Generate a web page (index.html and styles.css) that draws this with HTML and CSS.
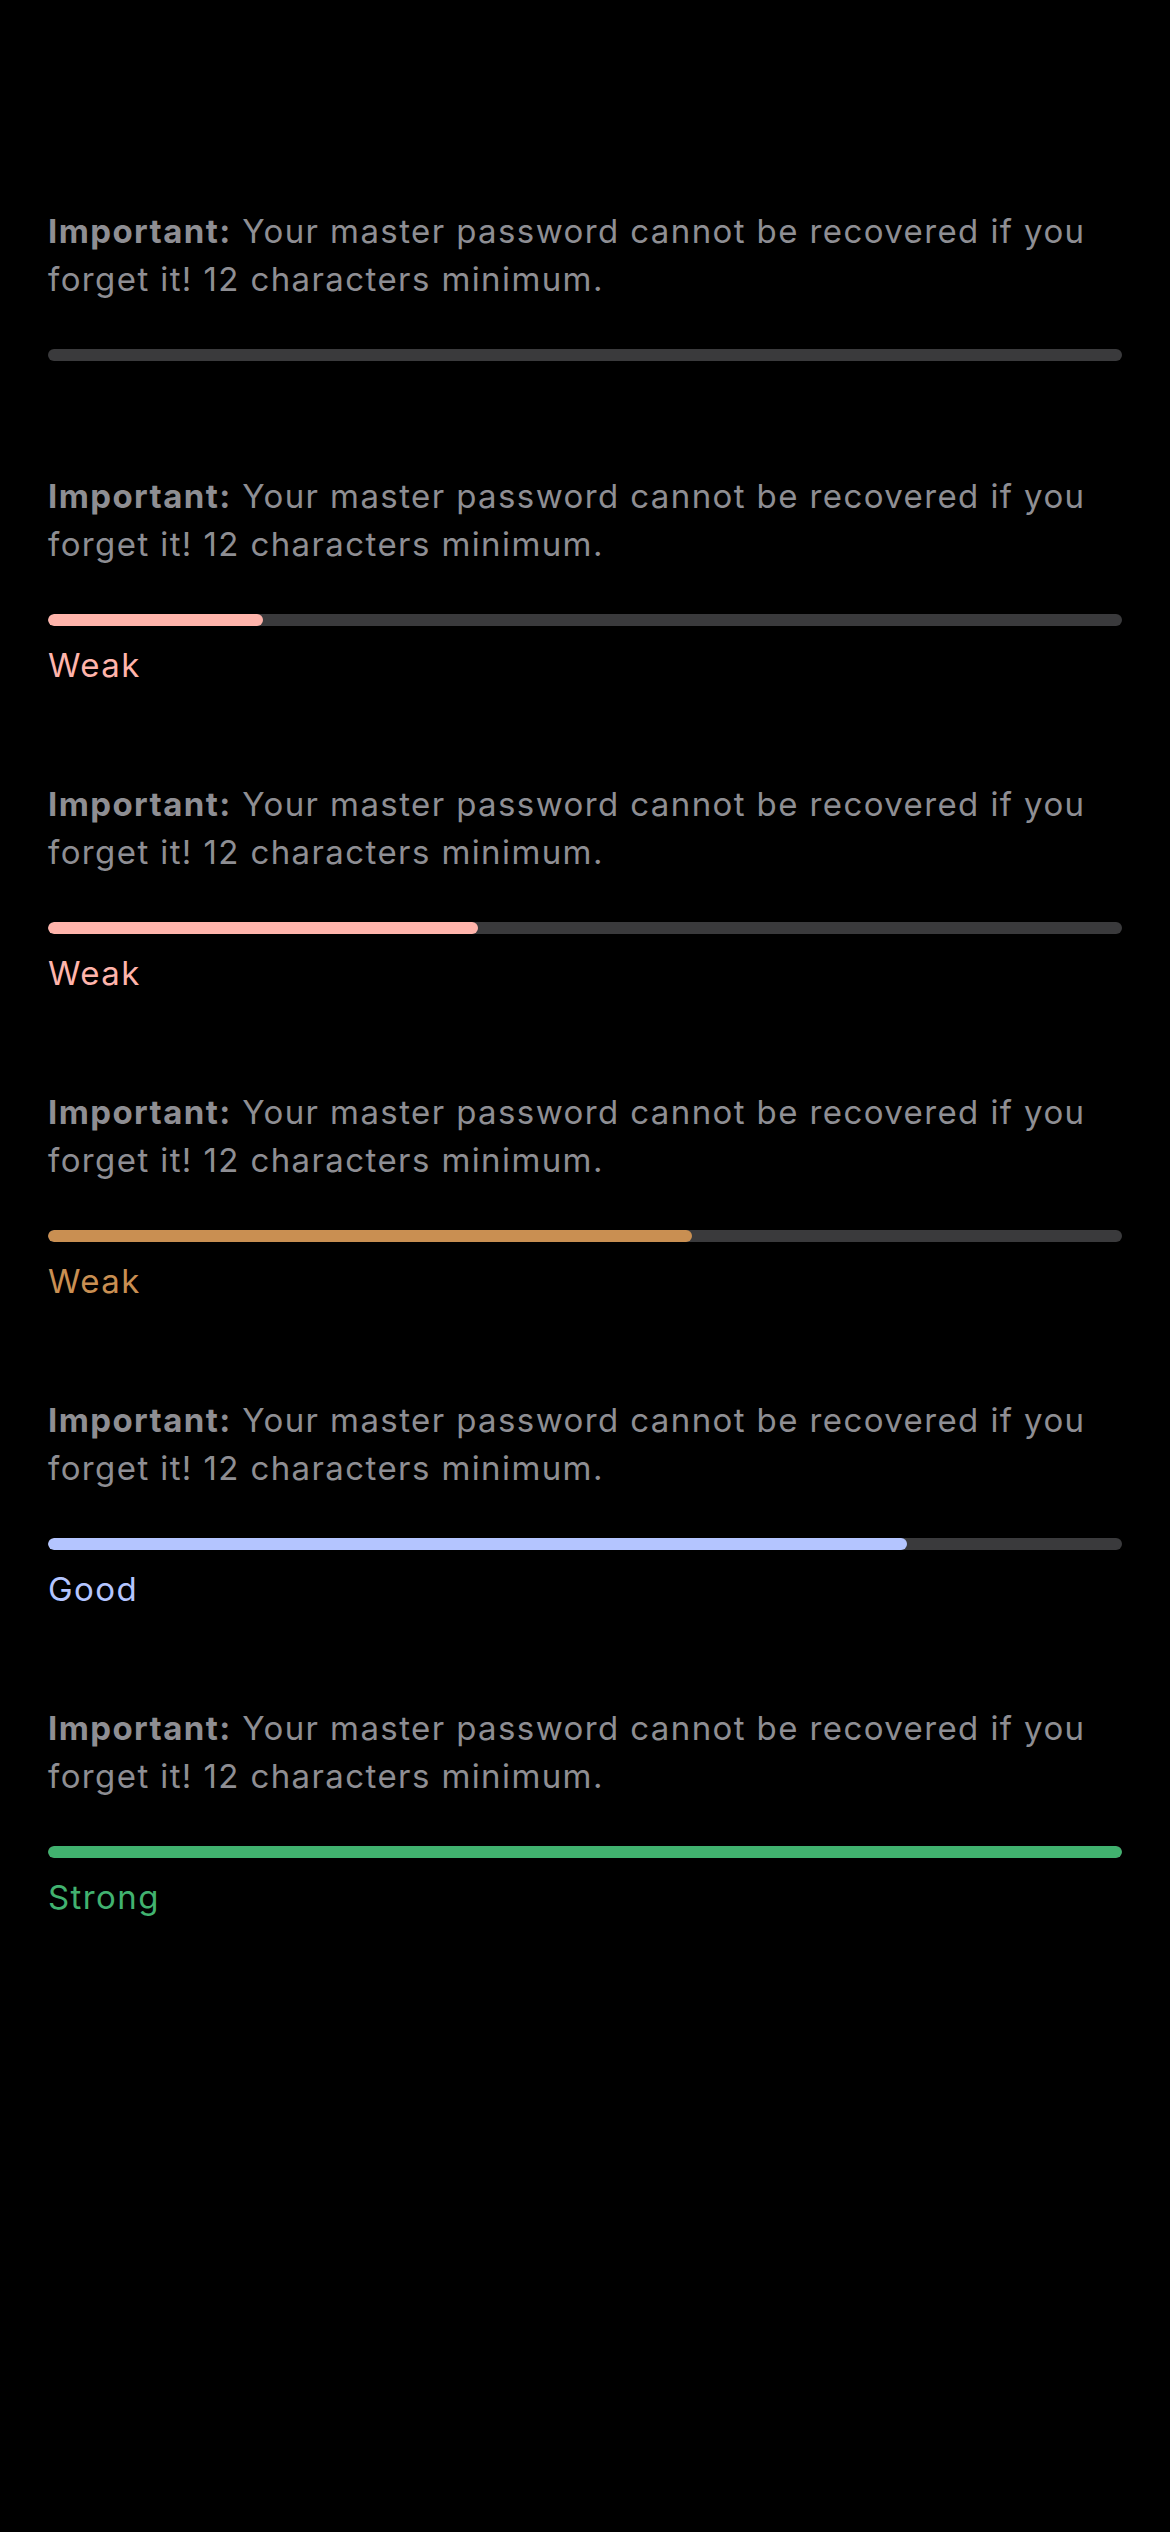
FILE: index.html
```html
<!DOCTYPE html>
<html lang="en">
<head>
<meta charset="utf-8">
<title>Password strength</title>
<link rel="stylesheet" href="styles.css">
</head>
<body>
<main class="list">
  <section class="item item--empty">
    <p class="hint"><strong>Important:</strong> Your master password cannot be recovered if you forget it! 12 characters minimum.</p>
    <div class="track"></div>
  </section>
  <section class="item">
    <p class="hint"><strong>Important:</strong> Your master password cannot be recovered if you forget it! 12 characters minimum.</p>
    <div class="track"><div class="fill fill--weak" style="width:20%"></div></div>
    <div class="label label--weak">Weak</div>
  </section>
  <section class="item">
    <p class="hint"><strong>Important:</strong> Your master password cannot be recovered if you forget it! 12 characters minimum.</p>
    <div class="track"><div class="fill fill--weak" style="width:40%"></div></div>
    <div class="label label--weak">Weak</div>
  </section>
  <section class="item">
    <p class="hint"><strong>Important:</strong> Your master password cannot be recovered if you forget it! 12 characters minimum.</p>
    <div class="track"><div class="fill fill--fair" style="width:60%"></div></div>
    <div class="label label--fair">Weak</div>
  </section>
  <section class="item">
    <p class="hint"><strong>Important:</strong> Your master password cannot be recovered if you forget it! 12 characters minimum.</p>
    <div class="track"><div class="fill fill--good" style="width:80%"></div></div>
    <div class="label label--good">Good</div>
  </section>
  <section class="item">
    <p class="hint"><strong>Important:</strong> Your master password cannot be recovered if you forget it! 12 characters minimum.</p>
    <div class="track"><div class="fill fill--strong" style="width:100%"></div></div>
    <div class="label label--strong">Strong</div>
  </section>
</main>
</body>
</html>
```
FILE: styles.css
```css
html, body {
  margin: 0;
  padding: 0;
  background: #000;
}
body {
  min-height: 2532px;
  font-family: Inter, "Noto Sans", "Liberation Sans", sans-serif;
  font-size: 33px;
  line-height: 48px;
  letter-spacing: 1.4px;
  color: #8e8e93;
}
.list {
  display: flex;
  flex-direction: column;
  padding: 207px 48px 0 48px;
}
.item {
  display: flex;
  flex-direction: column;
  margin-bottom: 91px;
}
.item--empty {
  margin-bottom: 111px;
}
.hint {
  margin: 0 0 46px 0;
}
.hint strong {
  font-weight: 700;
}
.track {
  height: 12px;
  border-radius: 6px;
  background: #3a3a3c;
  overflow: hidden;
  display: flex;
}
.fill {
  height: 100%;
  border-radius: 6px;
}
.fill--weak { background: #ffb4ab; }
.fill--fair { background: #c98f52; }
.fill--good { background: #b4c5ff; }
.fill--strong { background: #41b26f; }
.label {
  margin-top: 15px;
}
.label--weak { color: #ffb4ab; }
.label--fair { color: #c98f52; }
.label--good { color: #b4c5ff; }
.label--strong { color: #41b26f; }
```
